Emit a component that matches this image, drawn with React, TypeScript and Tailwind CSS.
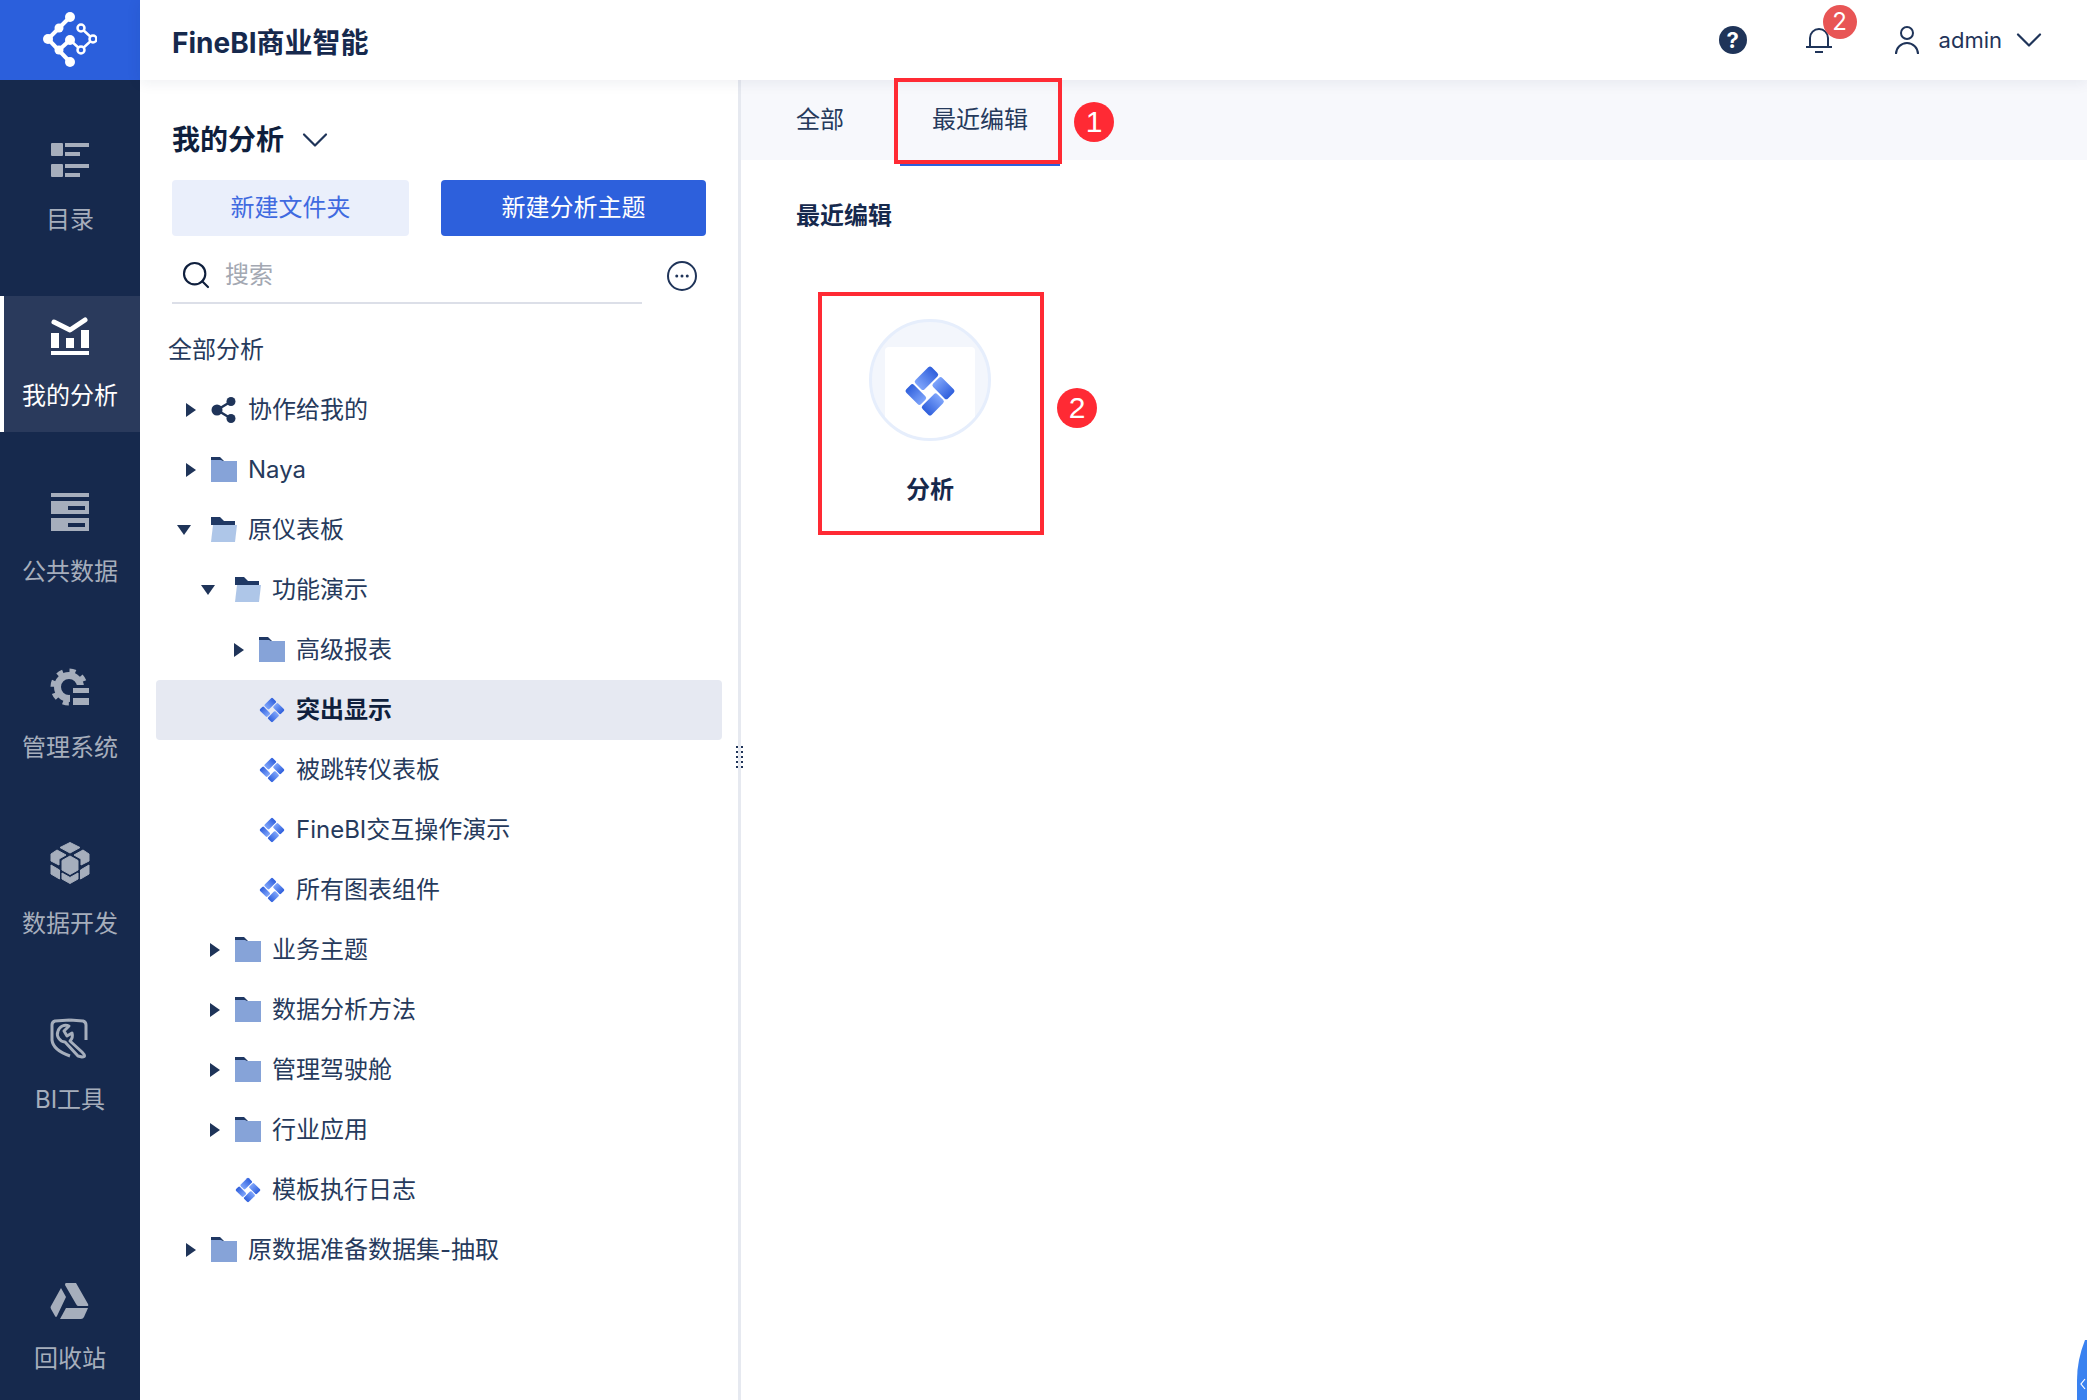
import { ChevronDown, Search, Ellipsis } from "lucide-react";

const FONT = "font-['Inter','Noto_Sans_CJK_SC',sans-serif]";

function Logo() {
  return (
    <svg width="64" height="64" viewBox="0 0 64 64" fill="none">
      <g stroke="#fff" strokeWidth="3">
        <path d="M37 9 L15 31 L37 54" strokeWidth="4" />
        <path d="M26 42 L37 32" strokeWidth="4" />
        <path d="M37 32 L48 42 L60 31 L48 20" strokeWidth="2.5" />
      </g>
      <g fill="#fff">
        <circle cx="37" cy="9" r="5" />
        <circle cx="26" cy="20" r="4.5" />
        <circle cx="15" cy="31" r="5" />
        <circle cx="26" cy="42" r="4.5" />
        <circle cx="37" cy="54" r="5" />
        <circle cx="37" cy="32" r="5" />
      </g>
      <g fill="#2b5fdc" stroke="#fff" strokeWidth="2.5">
        <circle cx="48" cy="20" r="3.5" />
        <circle cx="60" cy="31" r="3.5" />
        <circle cx="48" cy="42" r="3.5" />
      </g>
    </svg>
  );
}

function CatalogIcon() {
  return (
    <svg width="40" height="38" viewBox="0 0 40 38" fill="currentColor">
      <rect x="1" y="1" width="12" height="13" rx="1" />
      <rect x="15" y="1" width="24" height="4" />
      <rect x="15" y="10" width="15" height="4" />
      <rect x="1" y="22" width="12" height="13" rx="1" />
      <rect x="15" y="22" width="24" height="4" />
      <rect x="15" y="31" width="15" height="4" />
    </svg>
  );
}

function AnalysisIcon() {
  return (
    <svg width="40" height="40" viewBox="0 0 40 40" fill="currentColor">
      <path d="M4 6 L20 14 L35 4" fill="none" stroke="currentColor" strokeWidth="5" strokeLinecap="round" strokeLinejoin="round" />
      <rect x="1" y="17" width="8" height="15" />
      <rect x="16" y="22" width="8" height="10" />
      <rect x="31" y="14" width="8" height="18" />
      <rect x="1" y="35" width="38" height="4" />
    </svg>
  );
}

function DataIcon() {
  return (
    <svg width="40" height="40" viewBox="0 0 40 40">
      <path fill="currentColor" fillRule="evenodd" d="M1 1h38v4H1z M1 9h38v13H1z M18 14v4h17v-4z M1 26h38v13H1z M18 31v4h17v-4z" />
    </svg>
  );
}

function GearIcon() {
  return (
    <svg width="40" height="40" viewBox="0 0 40 40" fill="none">
      <circle cx="19" cy="19" r="11.5" stroke="currentColor" strokeWidth="7" />
      <circle cx="19" cy="19" r="16" stroke="currentColor" strokeWidth="5" strokeDasharray="6 6.57" />
      <rect x="20" y="17" width="20" height="23" fill="#16294d" />
      <rect x="23" y="20" width="16" height="5" fill="currentColor" />
      <rect x="23" y="30" width="16" height="7" fill="currentColor" />
    </svg>
  );
}

function CubeIcon() {
  return (
    <svg width="40" height="42" viewBox="0 0 40 42" fill="currentColor" stroke="currentColor" strokeWidth="1" strokeLinejoin="round">
      <path d="M20 0.5 L30 5.5 L20 11 L10 5.5 Z" />
      <path d="M7 8 L16 13 L9 17 V23 L1 19 V12 Z" />
      <path d="M33 8 L24 13 L31 17 V23 L39 19 V12 Z" />
      <path d="M20 14 L28 18.5 V28 L20 32.5 L12 28 V18.5 Z" />
      <path d="M1 23 L9.5 28 V37 L1 32 Z" />
      <path d="M39 23 L30.5 28 V37 L39 32 Z" />
      <path d="M12 31 L20 35.5 L28 31 V37 L20 41.5 L12 37 Z" />
    </svg>
  );
}

function ToolIcon() {
  return (
    <svg width="40" height="42" viewBox="0 0 40 42" fill="none" stroke="currentColor" strokeWidth="3" strokeLinejoin="round">
      <path d="M20 2 L33 3 Q36 4 36 7 V22 M20 38 Q3 32 2 22 V7 Q2 4 5 3 L20 2" />
      <path d="M8 13 A8 8 0 0 1 19 8 L14 13 L17 18 L22 15 A8 8 0 0 1 20 23 L32 34 Q37 39 32 39 L28 38 L15 24 A8 8 0 0 1 8 13 Z" />
    </svg>
  );
}

function RecycleIcon() {
  return (
    <svg width="40" height="36" viewBox="0 0 40 36" fill="currentColor">
      <path d="M16 0 H26 L38 21 Q39 23 37 23 H28 Q27 23 26 21 L15 2 Q15 0 16 0 Z" />
      <path d="M11 5 L16 14 L7 33 Q6 35 5 33 L1 26 Q0 24 1 23 Z" />
      <path d="M16 25 H38 L34 34 Q33 36 31 36 H10 Z" />
    </svg>
  );
}

function DocIcon({ size, id }: { size: number; id: string }) {
  const pieces = [
    { x: -18, y: -18, w: 13, h: 23, g: `${id}a` },
    { x: -3, y: -18, w: 21, h: 13, g: `${id}b` },
    { x: 5, y: -3, w: 13, h: 21, g: `${id}c` },
    { x: -18, y: 7, w: 21, h: 11, g: `${id}d` },
  ];
  return (
    <svg width={size} height={size} viewBox="-26 -26 52 52" className="shrink-0">
      <defs>
        <linearGradient id={`${id}a`} x1="0" y1="0" x2="0" y2="1">
          <stop offset="0" stopColor="#2f5fdc" />
          <stop offset="1" stopColor="#7fa5fb" />
        </linearGradient>
        <linearGradient id={`${id}b`} x1="0" y1="0" x2="1" y2="0">
          <stop offset="0" stopColor="#7fa5fb" />
          <stop offset="1" stopColor="#2f5fdc" />
        </linearGradient>
        <linearGradient id={`${id}c`} x1="0" y1="1" x2="0" y2="0">
          <stop offset="0" stopColor="#2f5fdc" />
          <stop offset="1" stopColor="#7fa5fb" />
        </linearGradient>
        <linearGradient id={`${id}d`} x1="1" y1="0" x2="0" y2="0">
          <stop offset="0" stopColor="#7fa5fb" />
          <stop offset="1" stopColor="#2f5fdc" />
        </linearGradient>
      </defs>
      <g transform="rotate(45)">
        {pieces.map((p) => (
          <rect key={p.g} x={p.x} y={p.y} width={p.w} height={p.h} rx="2.5" fill={`url(#${p.g})`} />
        ))}
      </g>
    </svg>
  );
}

function FolderIcon({ open }: { open?: boolean }) {
  if (open) {
    return (
      <svg width="26" height="26" viewBox="0 0 26 26">
        <path d="M0 0 H9 L13 4 H24 V8 H0 Z" fill="#1f3864" />
        <path d="M2 8 H26 L24 25 H0 Z" fill="#aec6e8" />
      </svg>
    );
  }
  return (
    <svg width="26" height="26" viewBox="0 0 26 26">
      <path d="M0 0 H9 L13 4 H8 L0 5 Z" fill="#1f3864" />
      <path d="M0 3 H10 L12 4 H26 V25 H0 Z" fill="#86a3d8" />
    </svg>
  );
}

function ShareIcon() {
  return (
    <svg width="26" height="26" viewBox="0 0 26 26" fill="#1f3459">
      <circle cx="6" cy="13" r="5.5" />
      <circle cx="20" cy="4.5" r="4.5" />
      <circle cx="20" cy="21.5" r="4.5" />
      <path d="M6 13 L20 4.5 M6 13 L20 21.5" stroke="#1f3459" strokeWidth="2.5" />
    </svg>
  );
}

const navItems = [
  { label: "目录", icon: <CatalogIcon /> },
  { label: "我的分析", icon: <AnalysisIcon />, active: true },
  { label: "公共数据", icon: <DataIcon /> },
  { label: "管理系统", icon: <GearIcon /> },
  { label: "数据开发", icon: <CubeIcon /> },
  { label: "BI工具", icon: <ToolIcon /> },
];

function NavItem({ label, icon, active }: { label: string; icon: React.ReactNode; active?: boolean }) {
  return (
    <div
      className={
        active
          ? "h-[136px] flex flex-col items-center bg-[#2a3a5c] text-white border-l-4 border-white pr-1"
          : "h-[136px] flex flex-col items-center text-[#a6aebc]"
      }
    >
      <div className="h-[60px] flex items-end">{icon}</div>
      <div className="mt-[24px] text-[24px] leading-[32px]">{label}</div>
    </div>
  );
}

type TreeRow = {
  label: string;
  depth: 1 | 2 | 3;
  kind: "share" | "folder" | "open" | "doc";
  arrow?: "closed" | "open";
  selected?: boolean;
};

const rows: TreeRow[] = [
  { label: "协作给我的", depth: 1, kind: "share", arrow: "closed" },
  { label: "Naya", depth: 1, kind: "folder", arrow: "closed" },
  { label: "原仪表板", depth: 1, kind: "open", arrow: "open" },
  { label: "功能演示", depth: 2, kind: "open", arrow: "open" },
  { label: "高级报表", depth: 3, kind: "folder", arrow: "closed" },
  { label: "突出显示", depth: 3, kind: "doc", selected: true },
  { label: "被跳转仪表板", depth: 3, kind: "doc" },
  { label: "FineBI交互操作演示", depth: 3, kind: "doc" },
  { label: "所有图表组件", depth: 3, kind: "doc" },
  { label: "业务主题", depth: 2, kind: "folder", arrow: "closed" },
  { label: "数据分析方法", depth: 2, kind: "folder", arrow: "closed" },
  { label: "管理驾驶舱", depth: 2, kind: "folder", arrow: "closed" },
  { label: "行业应用", depth: 2, kind: "folder", arrow: "closed" },
  { label: "模板执行日志", depth: 2, kind: "doc" },
  { label: "原数据准备数据集-抽取", depth: 1, kind: "folder", arrow: "closed" },
];

const depthPad = { 1: "pl-[21px]", 2: "pl-[45px]", 3: "pl-[69px]" };

function Row({ row, index }: { row: TreeRow; index: number }) {
  return (
    <div
      className={`h-[60px] flex items-center rounded-[4px] text-[24px] ${depthPad[row.depth]} ${
        row.selected ? "bg-[#e6e9f2] font-bold text-[#0f1f3d]" : "text-[#263a5c]"
      }`}
    >
      <div className="w-[34px] shrink-0 flex">
        {row.arrow === "closed" && <div className="ml-[9px] w-0 h-0 border-y-[7px] border-y-transparent border-l-[10px] border-l-[#1f3459]" />}
        {row.arrow === "open" && <div className="w-0 h-0 border-x-[7px] border-x-transparent border-t-[10px] border-t-[#1f3459]" />}
      </div>
      <div className="w-[26px] h-[26px] shrink-0 flex items-center justify-center">
        {row.kind === "share" && <ShareIcon />}
        {row.kind === "folder" && <FolderIcon />}
        {row.kind === "open" && <FolderIcon open />}
        {row.kind === "doc" && <DocIcon size={26} id={`doc${index}`} />}
      </div>
      <span className="ml-[11px] whitespace-nowrap">{row.label}</span>
    </div>
  );
}

export default function App() {
  return (
    <div className={`relative w-[2087px] h-[1400px] overflow-hidden flex bg-white ${FONT}`}>
      <aside className="w-[140px] shrink-0 bg-[#16294d] flex flex-col">
        <div className="h-[80px] bg-[#2b5fdc] flex items-center justify-center pr-[10px]">
          <Logo />
        </div>
        <div className="mt-[40px] flex flex-col gap-[40px]">
          {navItems.map((n) => (
            <NavItem key={n.label} {...n} />
          ))}
        </div>
        <div className="mt-auto mb-[5px]">
          <NavItem label="回收站" icon={<RecycleIcon />} />
        </div>
      </aside>

      <div className="flex-1 flex flex-col min-w-0">
        <header className="relative z-10 h-[80px] shrink-0 bg-white flex items-center pl-[32px] shadow-[0_2px_14px_rgba(22,41,77,0.08)]">
          <div className="mt-[6px] text-[28px] font-bold text-[#16294d]">FineBI商业智能</div>
          <div className="ml-auto flex items-center text-[#1f3459]">
            <div className="w-[28px] h-[28px] rounded-full bg-[#1f3459] text-white font-bold text-[22px] leading-[28px] text-center">?</div>
            <div className="relative ml-[58px]">
              <svg width="28" height="28" viewBox="0 0 28 28" fill="none" stroke="#1f3459" strokeWidth="2">
                <path d="M5 21 V12 A9 9 0 0 1 23 12 V21" />
                <path d="M1 21 H27" />
                <path d="M10 26 H18" />
              </svg>
              <div className="absolute left-[18px] -top-[21px] w-[34px] h-[34px] rounded-full bg-[#e85555] text-white text-[24px] leading-[34px] text-center">2</div>
            </div>
            <svg className="ml-[60px]" width="28" height="30" viewBox="0 0 28 30" fill="none" stroke="#1f3459" strokeWidth="2">
              <circle cx="14" cy="8" r="6" />
              <path d="M3 29 A11 11 0 0 1 25 29" />
            </svg>
            <span className="ml-[18px] text-[22px]">admin</span>
            <ChevronDown className="ml-[5px] mr-[36px]" size={44} strokeWidth={1.2} />
          </div>
        </header>

        <div className="flex-1 flex min-h-0">
          <section className="relative w-[601px] shrink-0 border-r-[3px] border-[#e6e9f0]">
            <div className="pl-[32px] pr-[32px] pt-[40px]">
              <div className="h-[40px] flex items-center text-[28px] font-bold text-[#0f1f3d]">
                我的分析
                <ChevronDown className="ml-[9px] text-[#1f3459]" size={44} strokeWidth={1.2} />
              </div>
              <div className="mt-[20px] flex gap-[32px]">
                <button className="w-[237px] h-[56px] rounded-[4px] bg-[#eaeffb] text-[#3f6ae0] text-[24px]">新建文件夹</button>
                <button className="w-[265px] h-[56px] rounded-[4px] bg-[#2d60dc] text-white text-[24px]">新建分析主题</button>
              </div>
              <div className="flex items-start">
                <div className="w-[470px] h-[68px] border-b-2 border-[#dcdfe8] flex items-center pl-[8px] pt-[12px]">
                  <Search className="text-[#0f1f3d]" size={32} strokeWidth={1.6} />
                  <span className="ml-[13px] text-[24px] text-[#a3a8b2]">搜索</span>
                </div>
                <div className="ml-[25px] mt-[25px] w-[30px] h-[30px] rounded-full border-2 border-[#1f3459] flex items-center justify-center text-[#1f3459]">
                  <Ellipsis size={18} strokeWidth={2} />
                </div>
              </div>
            </div>
            <div className="mt-[16px] pl-[16px] w-[582px]">
              <div className="h-[60px] flex items-center pl-[12px] text-[24px] text-[#263a5c]">全部分析</div>
              {rows.map((r, i) => (
                <Row key={r.label} row={r} index={i} />
              ))}
            </div>
            <div className="absolute -right-[5px] top-[666px] grid grid-cols-2 gap-x-[3px] gap-y-[3px]">
              {Array.from({ length: 10 }).map((_, i) => (
                <div key={i} className="w-[2px] h-[2px] bg-[#1f3459]" />
              ))}
            </div>
          </section>

          <main className="flex-1 min-w-0">
            <div className="h-[80px] bg-[#f7f8fc] flex items-start pl-[23px] gap-[24px] text-[24px] text-[#263a5c]">
              <div className="h-[80px] px-[32px] flex items-center">全部</div>
              <div className="relative w-[160px] h-[86px] border-b-[6px] border-[#2d60dc] flex items-center justify-center box-border">
                最近编辑
                <div className="absolute z-20 -left-[6px] -top-[2px] w-[168px] h-[86px] border-4 border-[#ff2a34]" />
                <div className="absolute left-[174px] top-[22px] w-[40px] h-[40px] rounded-full bg-[#ff2a34] text-white text-[30px] leading-[40px] text-center font-['Liberation_Sans',sans-serif]">1</div>
              </div>
            </div>
            <div className="pl-[55px] pt-[40px]">
              <div className="text-[24px] leading-[32px] font-bold text-[#16294d]">最近编辑</div>
              <div className="relative ml-[22px] mt-[60px] w-[226px] h-[243px] border-4 border-[#ff2a34] flex flex-col items-center box-border pr-[2px]">
                <div className="mt-[23px] w-[122px] h-[122px] shrink-0 rounded-full bg-[#f3f6fc] border-[3px] border-[#e6eefc] overflow-hidden flex justify-center">
                  <div className="mt-[25px] w-[90px] h-[100px] bg-white rounded-t-[4px] flex justify-center pt-[18px]">
                    <DocIcon size={52} id="card" />
                  </div>
                </div>
                <div className="mt-[33px] text-[24px] leading-[32px] font-bold text-[#16294d]">分析</div>
                <div className="absolute left-[235px] top-[92px] w-[40px] h-[40px] rounded-full bg-[#ff2a34] text-white text-[30px] leading-[40px] text-center font-['Liberation_Sans',sans-serif]">2</div>
              </div>
            </div>
          </main>
        </div>
      </div>

      <svg className="absolute right-0 bottom-0" width="10" height="60" viewBox="0 0 10 60">
        <path d="M8 0 Q0 20 0 40 V60 H10 V0 Z" fill="#3a82f0" />
        <path d="M8 39 L4 44 L8 49" fill="none" stroke="#fff" strokeWidth="1.2" />
      </svg>
    </div>
  );
}
